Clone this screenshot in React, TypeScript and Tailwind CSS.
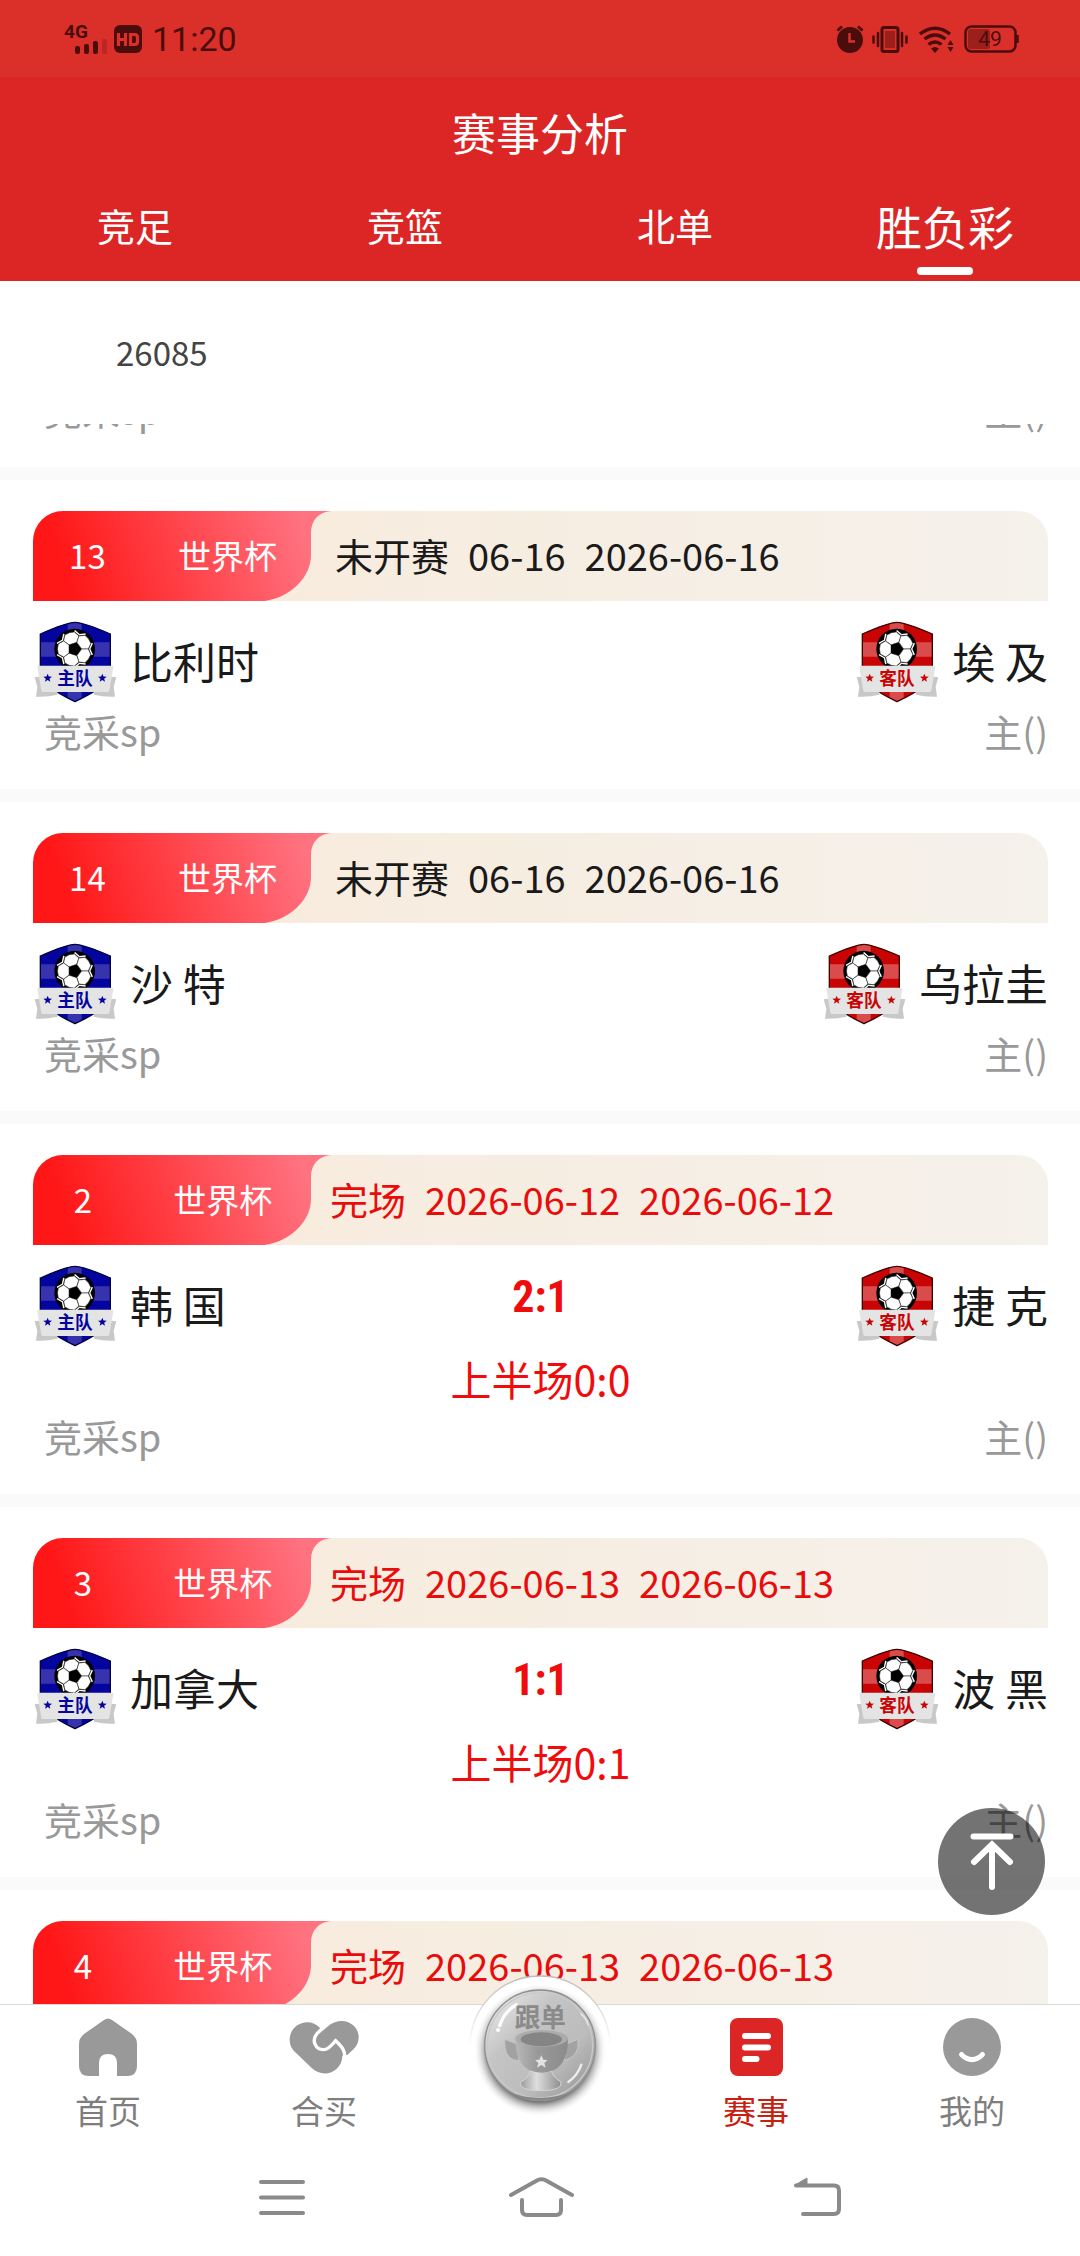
import type { ReactNode } from "react";

type Match = {
  no: number;
  league: string;
  status: string;
  dates: string[];
  home?: string;
  away?: string;
  score?: string;
  half?: string;
};

const matches: Match[] = [
  { no: 13, league: "世界杯", status: "未开赛", dates: ["06-16", "2026-06-16"], home: "比利时", away: "埃 及" },
  { no: 14, league: "世界杯", status: "未开赛", dates: ["06-16", "2026-06-16"], home: "沙 特", away: "乌拉圭" },
  { no: 2, league: "世界杯", status: "完场", dates: ["2026-06-12", "2026-06-12"], home: "韩 国", away: "捷 克", score: "2:1", half: "上半场0:0" },
  { no: 3, league: "世界杯", status: "完场", dates: ["2026-06-13", "2026-06-13"], home: "加拿大", away: "波 黑", score: "1:1", half: "上半场0:1" },
  { no: 4, league: "世界杯", status: "完场", dates: ["2026-06-13", "2026-06-13"] },
];

const tabs = ["竞足", "竞篮", "北单", "胜负彩"];

function StatusBar() {
  return (
    <div className="flex h-[77px] items-center justify-between bg-[#db302a] pr-[61px] pl-[63px] text-[#4a0d0b]">
      <div className="flex items-center">
        <svg width="45" height="32" viewBox="-1 -3 45 32" className="mr-[6px] mb-[2px]" fill="currentColor">
          <text x="0" y="13" fontSize="19" fontWeight="700" fontFamily="Roboto, sans-serif">4G</text>
          <rect x="11" y="21" width="5" height="8" rx="2" />
          <rect x="20" y="19" width="5" height="10" rx="2" />
          <rect x="29" y="16" width="5" height="13" rx="2" />
          <rect x="38" y="14" width="5" height="15" rx="2" fill="#bd2622" />
        </svg>
        <svg width="28" height="28" viewBox="0 0 28 28" className="mr-[10px]">
          <rect width="28" height="28" rx="6" fill="currentColor" />
          <path d="M4.500 8v13M11.500 8v13M4.500 14.500h7M16.500 9.500h4q3 0 3 3v4q0 3-3 3h-4z" fill="none" stroke="#db302a" strokeWidth="3.200" />
        </svg>
        <span className="font-[Roboto,sans-serif] text-[34px] leading-[40px]">11:20</span>
      </div>

      <div className="flex items-center">
        <svg width="28" height="28" viewBox="0 0 28 28" className="mr-[8px]">
          <circle cx="14" cy="15" r="13" fill="currentColor" />
          <path d="M1.500 5.500 6 1.500M26.500 5.500 22 1.500" stroke="currentColor" strokeWidth="3" />
          <path d="M13.500 8v8.500H19" fill="none" stroke="#db302a" strokeWidth="2.500" />
        </svg>
        <svg width="36" height="28" viewBox="0 0 36 28" className="mr-[11px]" fill="none" stroke="currentColor">
          <rect x="10" y="2.500" width="16" height="24" rx="2" strokeWidth="3" />
          <rect x="13" y="6" width="10" height="17" fill="#9c1f1b" stroke="none" />
          <path d="M6 8v13M30 8v13M1.500 11.500v6M34.500 11.500v6" strokeWidth="2.500" strokeLinecap="round" />
        </svg>
        <svg width="35" height="28" viewBox="0 0 35 28" className="mr-[10px]" fill="none" stroke="currentColor" strokeWidth="3.400">
          <path d="M1 9Q16 -2.500 31 9M5.500 14Q16 6 26.500 14M9.500 19.500Q16 14.500 22.500 19.500" />
          <path d="M16 28 12 23.500Q16 20.500 20 23.500z" fill="currentColor" stroke="none" />
          <path d="M31.500 15l3 5h-6zM31.500 27l3-5h-6z" fill="currentColor" stroke="none" />
        </svg>
        <svg width="55" height="28" viewBox="0 0 55 28">
          <rect x="1.500" y="1.500" width="50" height="25" rx="6" fill="none" stroke="currentColor" strokeWidth="2.500" />
          <rect x="4" y="4" width="22" height="20" rx="3" fill="#9c1f1b" />
          <path d="M53.500 10v8" stroke="currentColor" strokeWidth="2.500" />
          <text x="26" y="21" textAnchor="middle" fontSize="21" fontFamily="Roboto, sans-serif" fill="currentColor">49</text>
        </svg>
      </div>
    </div>
  );
}

function Header() {
  return (
    <header className="bg-[#dc2626] text-white">
      <StatusBar />
      <h1 className="pb-1 text-center text-[44px] leading-[110px]">赛事分析</h1>
      <nav className="flex h-[90px]">
        {tabs.map((tab) => {
          const active = tab === "胜负彩";
          return (
            <button key={tab} type="button" className="relative flex flex-1 items-start justify-center">
              <span className={active ? "text-[46px] leading-[68px]" : "text-[38px] leading-[68px]"}>{tab}</span>
              {active && <span className="absolute bottom-[6px] left-1/2 h-2 w-14 -translate-x-1/2 rounded-full bg-white" />}
            </button>
          );
        })}
      </nav>
    </header>
  );
}

function Shield({ side }: { side: "home" | "away" }) {
  const home = side === "home";
  const main = home ? "#04049f" : "#c90404";
  const band = home ? "#3733ae" : "#da4c4c";
  const edge = home ? "#02023c" : "#3c0202";
  const shape = "M225 367Q250 367 331 402V520Q331 556 225 605Q121 556 121 520V402Q200 367 225 367z";
  const star = "M0-13 3.500-4.500 13-4 5.500 2 8 11 0 6-8 11-5.500 2-13-4-3.500-4.500z";

  return (
    <svg width="87" height="87" viewBox="99 354 261 261" className="shrink-0">
      <clipPath id={`shield-${side}`}>
        <path d={shape} />
      </clipPath>
      <g clipPath={`url(#shield-${side})`}>
        <rect x="110" y="360" width="230" height="250" fill={main} />
        <path d="M203 360h42v250h-42zM110 427h230v43H110z" fill={band} />
      </g>
      <path d={shape} fill="none" stroke={edge} strokeWidth="4" />
      <g transform="translate(224 447)">
        <circle r="61" fill="#000" />
        {[-108, -36, 36, 108, 180].map((angle) => (
          <g key={angle} transform={`rotate(${angle})`}>
            <path d="M17-12 33-24 49-15Q54 0 49 15L33 24 17 12z" fill="#fff" stroke="#222" strokeWidth="1.500" />
            <path d="M34-26 38-28 54-19 52-15zM34 26 38 28 54 19 52 15z" fill="#fff" />
          </g>
        ))}
      </g>
      <path d="M117 530 104 532 112 560 108 590Q140 592 172 584V560zM335 530 349 532 341 560 345 590Q312 592 282 584V560z" fill="#c8c8c8" />
      <path d="M112 501Q112 497 118 497H335Q341 497 340 501L328 572Q327 576 322 576H130Q125 576 124 572z" fill="#e4e4e4" />
      <path d={star} transform="translate(143 534)" fill={main} />
      <path d={star} transform="translate(307 534)" fill={main} />
      <text x="225" y="554" textAnchor="middle" fontSize="53" fontWeight="700" fill={main}>
        {home ? "主队" : "客队"}
      </text>
    </svg>
  );
}

function OddsRow() {
  return (
    <div className="flex justify-between pb-8 pl-[11px] text-[38px] leading-[52px] text-[#999999]">
      <span>竞采sp</span>
      <span>主()</span>
    </div>
  );
}

function MatchCard({ match }: { match: Match }) {
  const finished = match.status === "完场";

  return (
    <article className="border-b-[13px] border-[#fafafa] pt-[31px] pr-8 pl-[33px]">
      <div className="relative flex h-[90px] items-center overflow-hidden rounded-t-[30px] bg-linear-to-r from-[#f8ead9] to-[#f5f1eb]">
        <svg width="300" height="90" viewBox="0 0 300 90" className="absolute top-0 left-0">
          <defs>
            <linearGradient id={`tag-${match.no}`} x1="0" y1="0.100" x2="1" y2="0">
              <stop offset="0.050" stopColor="#ff1717" />
              <stop offset="0.900" stopColor="#ff7381" />
            </linearGradient>
          </defs>
          <path d="M0 0H298C286 1 278 9 278 22V44C278 66 258 86 232 90H0z" fill={`url(#tag-${match.no})`} />
        </svg>
        <div className="relative flex w-[280px] shrink-0 justify-around text-[33px] text-white">
          <span>{match.no}</span>
          <span>{match.league}</span>
        </div>
        <div
          className={
            finished
              ? "flex gap-[19px] pb-[3px] pl-[17px] text-[38px] whitespace-nowrap text-[#e80c0c]"
              : "flex gap-[19px] pb-[3px] pl-[22px] text-[38px] whitespace-nowrap text-[#1a1a1a]"
          }
        >
          <span>{match.status}</span>
          {match.dates.map((date, i) => (
            <time key={i}>{date}</time>
          ))}
        </div>
      </div>

      {match.home && (
        <>
          <div className="grid grid-cols-[1fr_auto_1fr] items-start pt-[17px] text-[43px] leading-[85px] text-[#1a1a1a]">
            <div className="flex gap-[10px]">
              <Shield side="home" />
              <span>{match.home}</span>
            </div>
            <div className="flex flex-col items-center gap-[18px] text-[#f00c0c]">
              {match.score && (
                <strong className="font-['Roboto_Condensed','Liberation_Sans_Narrow',sans-serif] text-[44px] leading-[70px]">
                  {match.score}
                </strong>
              )}
              {match.half && <span className="pb-1 text-[41px] leading-[56px]">{match.half}</span>}
            </div>
            <div className="flex justify-end gap-[10px]">
              <Shield side="away" />
              <span>{match.away}</span>
            </div>
          </div>
          <OddsRow />
        </>
      )}
    </article>
  );
}

function NavItem({ label, active, children }: { label: string; active?: boolean; children: ReactNode }) {
  return (
    <a href="#" className="flex flex-1 flex-col items-center pt-[13px]">
      {children}
      <span className={active ? "mt-2 text-[33px] leading-[50px] text-[#c8200f]" : "mt-2 text-[33px] leading-[50px] text-[#7e7e7e]"}>
        {label}
      </span>
    </a>
  );
}

function TrophyCoin() {
  return (
    <svg width="144" height="144" viewBox="145 220 432 432" className="absolute -top-[31px] left-1/2 -translate-x-1/2">
      <defs>
        <linearGradient id="rim" x1="0" y1="0" x2="0" y2="1">
          <stop offset="0" stopColor="#bdbdbd" />
          <stop offset="0.500" stopColor="#bdbdbd" stopOpacity="0" />
        </linearGradient>
        <radialGradient id="shade">
          <stop offset="0.780" stopColor="#777" />
          <stop offset="0.880" stopColor="#bbb" stopOpacity="0.600" />
          <stop offset="1" stopColor="#fff" stopOpacity="0" />
        </radialGradient>
        <linearGradient id="coin" x1="0" y1="0" x2="1" y2="1">
          <stop offset="0" stopColor="#f0f0f0" />
          <stop offset="0.350" stopColor="#c4c4c4" />
          <stop offset="0.650" stopColor="#bcbcbc" />
          <stop offset="1" stopColor="#8f8f8f" />
        </linearGradient>
        <linearGradient id="cup" x1="0" y1="0" x2="1" y2="0">
          <stop offset="0" stopColor="#b8b8b8" />
          <stop offset="0.400" stopColor="#9a9a9a" />
          <stop offset="1" stopColor="#8b8b8b" />
        </linearGradient>
        <linearGradient id="foot" x1="0" y1="0" x2="1" y2="0">
          <stop offset="0" stopColor="#9a9a9a" />
          <stop offset="0.400" stopColor="#dedede" />
          <stop offset="1" stopColor="#8d8d8d" />
        </linearGradient>
      </defs>
      <circle cx="361" cy="436" r="210" fill="#fff" stroke="url(#rim)" strokeWidth="4" />
      <circle cx="361" cy="448" r="200" fill="url(#shade)" />
      <circle cx="361" cy="434" r="166" fill="url(#coin)" stroke="#8f8f8f" strokeWidth="4" />
      <circle cx="361" cy="434" r="158" fill="none" stroke="#c9c9c9" strokeWidth="4" />
      <path d="M240 375Q252 335 290 312" fill="none" stroke="#fff" strokeWidth="10" strokeLinecap="round" />
      <circle cx="235" cy="388" r="6" fill="#fff" />
      <path d="M485 492Q474 524 446 544" fill="none" stroke="#eee" strokeWidth="7" strokeLinecap="round" />
      <path d="M484 340Q500 352 505 372" fill="none" stroke="#e6e6e6" strokeWidth="5" strokeLinecap="round" />
      <path d="M255 416 292 430 298 480Q262 480 256 440zM475 416 440 430 434 480Q468 470 475 440z" fill="#a2a2a2" stroke="#c6c6c6" strokeWidth="3" />
      <path d="M262 572Q361 612 462 572Q420 598 361 598Q305 598 262 572z" fill="#858585" />
      <path d="M330 512H396Q398 528 424 544Q430 570 364 570 296 570 302 544 328 532 330 512z" fill="url(#foot)" stroke="#d5d5d5" strokeWidth="3" />
      <path d="M287 412Q287 516 366 516Q445 516 445 412z" fill="url(#cup)" />
      <ellipse cx="366" cy="413" rx="79" ry="25" fill="#ababab" />
      <ellipse cx="365" cy="416" rx="62" ry="21" fill="#858585" />
      <path d="M365 464 371 477 384 478 374 487 378 501 365 493 352 501 356 487 346 478 359 477z" fill="#e2e2e2" />
      <text x="362" y="378" textAnchor="middle" fontSize="77" fontWeight="700" fill="#8a8a8a">跟单</text>
    </svg>
  );
}

function BottomNav() {
  return (
    <nav className="relative flex h-[134px] shrink-0 border-t border-[#d9d9d9] bg-white">
      <NavItem label="首页">
        <svg width="58" height="59" viewBox="0 0 58 59" fill="#999999">
          <path d="M25 2Q29-1 33 2L53 16Q58 20 58 26V48Q58 58 48 58H38V45Q38 36 29 36T20 45V58H10Q0 58 0 48V26Q0 20 5 16z" />
        </svg>
      </NavItem>
      <NavItem label="合买">
        <svg width="70" height="59" viewBox="868 355 210 177">
          <path
            d="M923 368C893 368 870 392 870 420C870 436 876 447 886 457L937 506C958 526 992 526 1011 507C1022 496 1028 484 1028 468L1044 465 1062 448C1072 438 1077 427 1077 412C1077 385 1053 364 1027 364C1010 364 996 370 985 380L969 393 961 385C950 374 938 368 923 368z"
            fill="#999999"
          />
          <path d="M969 385 952 402C934 422 948 450 971 450C984 450 990 442 1008 423C1028 442 1036 452 1036 474" fill="none" stroke="#fff" strokeWidth="10" />
        </svg>
      </NavItem>
      <a href="#" aria-label="跟单" className="relative flex-1">
        <TrophyCoin />
      </a>
      <NavItem label="赛事" active>
        <svg width="53" height="59" viewBox="0 0 53 59">
          <rect width="53" height="58" rx="8" fill="#dc2626" />
          <path d="M15 18h23M15 29.500h23M15 41h11.500" stroke="#fff" strokeWidth="6" strokeLinecap="round" />
        </svg>
      </NavItem>
      <NavItem label="我的">
        <svg width="58" height="59" viewBox="0 0 58 59">
          <circle cx="29" cy="29" r="29" fill="#999999" />
          <path d="M18.500 36.500Q29 47 39.500 36.500" fill="none" stroke="#fff" strokeWidth="5" strokeLinecap="round" />
        </svg>
      </NavItem>
    </nav>
  );
}

function SystemNav() {
  return (
    <div className="flex h-[118px] shrink-0 items-center justify-center bg-white pl-5">
      <button type="button" aria-label="菜单" className="mr-[204px]">
        <svg width="46" height="40" viewBox="0 0 46 40" stroke="#8a8a8a" strokeWidth="4" strokeLinecap="round">
          <path d="M2 5h42M2 20.500h42M2 36h42" />
        </svg>
      </button>
      <button type="button" aria-label="主屏幕" className="mr-[220px]">
        <svg width="65" height="40" viewBox="0 0 65 40" fill="none" stroke="#8a8a8a" strokeWidth="4" strokeLinecap="round">
          <path d="M2 18 27 4Q32.500 0.500 38 4L63 18M13 23v10q0 5 5 5h29q5 0 5-5V23" />
        </svg>
      </button>
      <button type="button" aria-label="返回">
        <svg width="47" height="40" viewBox="0 0 47 40" fill="none" stroke="#8a8a8a" strokeLinecap="round">
          <path d="M2 8.500H40q5 0 5 5V32q0 5-5 5H9" strokeWidth="4" />
          <path d="M1 8 13 1V9z" fill="#8a8a8a" strokeWidth="1" />
        </svg>
      </button>
    </div>
  );
}

export default function App() {
  return (
    <div className="flex h-screen flex-col overflow-hidden bg-white font-['Noto_Sans_CJK_SC',sans-serif]">
      <Header />

      <div className="flex h-[143px] shrink-0 items-center pl-[116px]">
        <button type="button" className="text-[33px] text-[#444444]">26085</button>
      </div>

      <main className="relative min-h-0 flex-1">
        <div className="h-full overflow-hidden">
          {/* tail of the card scrolled under the issue bar */}
          <div className="flex h-[56px] flex-col justify-end overflow-hidden border-b-[13px] border-[#fafafa] pr-8 pl-[33px]">
            <OddsRow />
          </div>
          {matches.map((match) => (
            <MatchCard key={match.no} match={match} />
          ))}
        </div>

        <button
          type="button"
          aria-label="回到顶部"
          className="absolute right-[35px] bottom-[89px] flex size-[107px] items-center justify-center rounded-full bg-black/55"
        >
          <svg width="44" height="58" viewBox="0 0 44 58" fill="none" stroke="#fff" strokeWidth="6" strokeLinecap="round">
            <path d="M3.500 3.500h37M22 14v40M4 29 22 11.500 40 29" />
          </svg>
        </button>
      </main>

      <BottomNav />
      <SystemNav />
    </div>
  );
}
